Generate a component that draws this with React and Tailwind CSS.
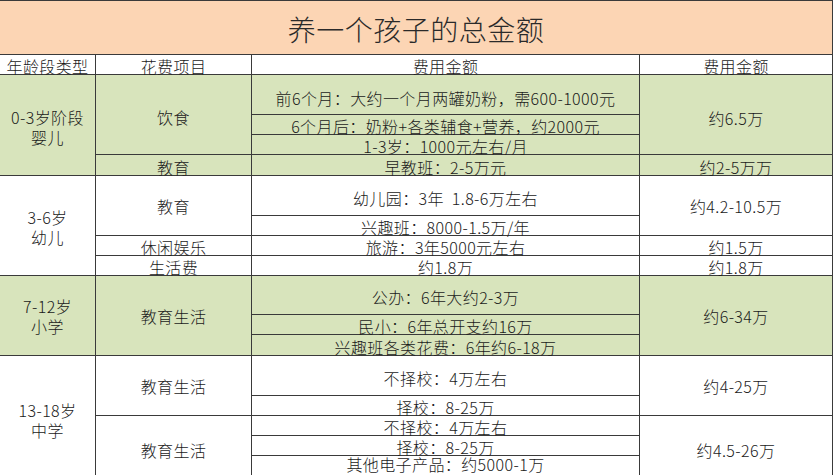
import React from "react";

const GREEN = "bg-[#d8e4bc]";

// one cell of the sheet
const Cell = ({ cls = "", children }) => (
  <div
    className={`flex justify-center whitespace-pre border-r border-b border-[#3a3a3a] text-[16px] leading-[16px] tracking-[0.4px] font-light text-[#1a1a1a] ${cls}`}
  >
    <span>{children}</span>
  </div>
);

const App = () => {
  return (
    <div
      className="w-[834px] h-[475px] overflow-hidden bg-white"
      style={{ fontFamily: '"Noto Sans CJK SC", "Noto Sans", sans-serif' }}
    >
      {/* title */}
      <div className="w-[833px] h-[55px] flex items-center justify-center bg-[#fcd5b4] border-t border-b border-r border-[#3a3a3a]">
        <span className="text-[28px] leading-none font-light text-[#2a2a2a] tracking-[0.5px] pt-[3px]">
          养一个孩子的总金额
        </span>
      </div>

      {/* header */}
      <div className="w-[833px] grid grid-cols-[96px_156px_388px_193px] h-[20px]">
        <Cell cls="items-end">年龄段类型</Cell>
        <Cell cls="items-end">花费项目</Cell>
        <Cell cls="items-end">费用金额</Cell>
        <Cell cls="items-end">费用金额</Cell>
      </div>

      {/* body */}
      <div className="w-[833px] grid grid-cols-[96px_156px_388px_193px] grid-rows-[40px_20px_20px_21px_40px_20px_20px_20px_39px_20px_21px_40px_20px_20px_20px_25px]">
        {/* 0-3 */}
        <Cell cls={`col-start-1 row-start-1 row-span-4 items-center pt-[4px] text-center leading-[20px] ${GREEN}`}>
          {"0-3岁阶段\n婴儿"}
        </Cell>
        <Cell cls={`col-start-2 row-start-1 row-span-3 items-center pt-[4px] ${GREEN}`}>饮食</Cell>
        <Cell cls={`col-start-3 row-start-1 items-center pt-[6px] ${GREEN}`}>
          前6个月：大约一个月两罐奶粉，需600-1000元
        </Cell>
        <Cell cls={`col-start-4 row-start-1 row-span-3 items-center pt-[6px] ${GREEN}`}>约6.5万</Cell>
        <Cell cls={`col-start-3 row-start-2 items-end ${GREEN}`}>
          6个月后：奶粉+各类辅食+营养，约2000元
        </Cell>
        <Cell cls={`col-start-3 row-start-3 items-end ${GREEN}`}>1-3岁：1000元左右/月</Cell>
        <Cell cls={`col-start-2 row-start-4 items-end ${GREEN}`}>教育</Cell>
        <Cell cls={`col-start-3 row-start-4 items-end ${GREEN}`}>早教班：2-5万元</Cell>
        <Cell cls={`col-start-4 row-start-4 items-end ${GREEN}`}>约2-5万万</Cell>

        {/* 3-6 */}
        <Cell cls="col-start-1 row-start-5 row-span-4 items-center pt-[2px] text-center leading-[20px]">
          {"3-6岁\n幼儿"}
        </Cell>
        <Cell cls="col-start-2 row-start-5 row-span-2 items-center">教育</Cell>
        <Cell cls="col-start-3 row-start-5 items-center pt-[4px]">幼儿园：3年  1.8-6万左右</Cell>
        <Cell cls="col-start-4 row-start-5 row-span-2 items-center">约4.2-10.5万</Cell>
        <Cell cls="col-start-3 row-start-6 items-end">兴趣班：8000-1.5万/年</Cell>
        <Cell cls="col-start-2 row-start-7 items-end">休闲娱乐</Cell>
        <Cell cls="col-start-3 row-start-7 items-end">旅游：3年5000元左右</Cell>
        <Cell cls="col-start-4 row-start-7 items-end">约1.5万</Cell>
        <Cell cls="col-start-2 row-start-8 items-end">生活费</Cell>
        <Cell cls="col-start-3 row-start-8 items-end">约1.8万</Cell>
        <Cell cls="col-start-4 row-start-8 items-end">约1.8万</Cell>

        {/* 7-12 */}
        <Cell cls={`col-start-1 row-start-9 row-span-3 items-center text-center leading-[20px] ${GREEN}`}>
          {"7-12岁\n小学"}
        </Cell>
        <Cell cls={`col-start-2 row-start-9 row-span-3 items-center ${GREEN}`}>教育生活</Cell>
        <Cell cls={`col-start-3 row-start-9 items-center pt-[4px] ${GREEN}`}>公办：6年大约2-3万</Cell>
        <Cell cls={`col-start-4 row-start-9 row-span-3 items-center ${GREEN}`}>约6-34万</Cell>
        <Cell cls={`col-start-3 row-start-10 items-end ${GREEN}`}>民小：6年总开支约16万</Cell>
        <Cell cls={`col-start-3 row-start-11 items-end ${GREEN}`}>兴趣班各类花费：6年约6-18万</Cell>

        {/* 13-18 */}
        <Cell cls="col-start-1 row-start-12 row-span-5 items-center pt-[4px] text-center leading-[20px]">
          {"13-18岁\n中学"}
        </Cell>
        <Cell cls="col-start-2 row-start-12 row-span-2 items-center">教育生活</Cell>
        <Cell cls="col-start-3 row-start-12 items-center pt-[4px]">不择校：4万左右</Cell>
        <Cell cls="col-start-4 row-start-12 row-span-2 items-center">约4-25万</Cell>
        <Cell cls="col-start-3 row-start-13 items-end">择校：8-25万</Cell>
        <Cell cls="col-start-2 row-start-14 row-span-3 items-center pt-[4px]">教育生活</Cell>
        <Cell cls="col-start-3 row-start-14 items-end">不择校：4万左右</Cell>
        <Cell cls="col-start-4 row-start-14 row-span-3 items-center pt-[4px]">约4.5-26万</Cell>
        <Cell cls="col-start-3 row-start-15 items-end">择校：8-25万</Cell>
        <Cell cls="col-start-3 row-start-16 items-start">其他电子产品：约5000-1万</Cell>
      </div>
    </div>
  );
};

export default App;
